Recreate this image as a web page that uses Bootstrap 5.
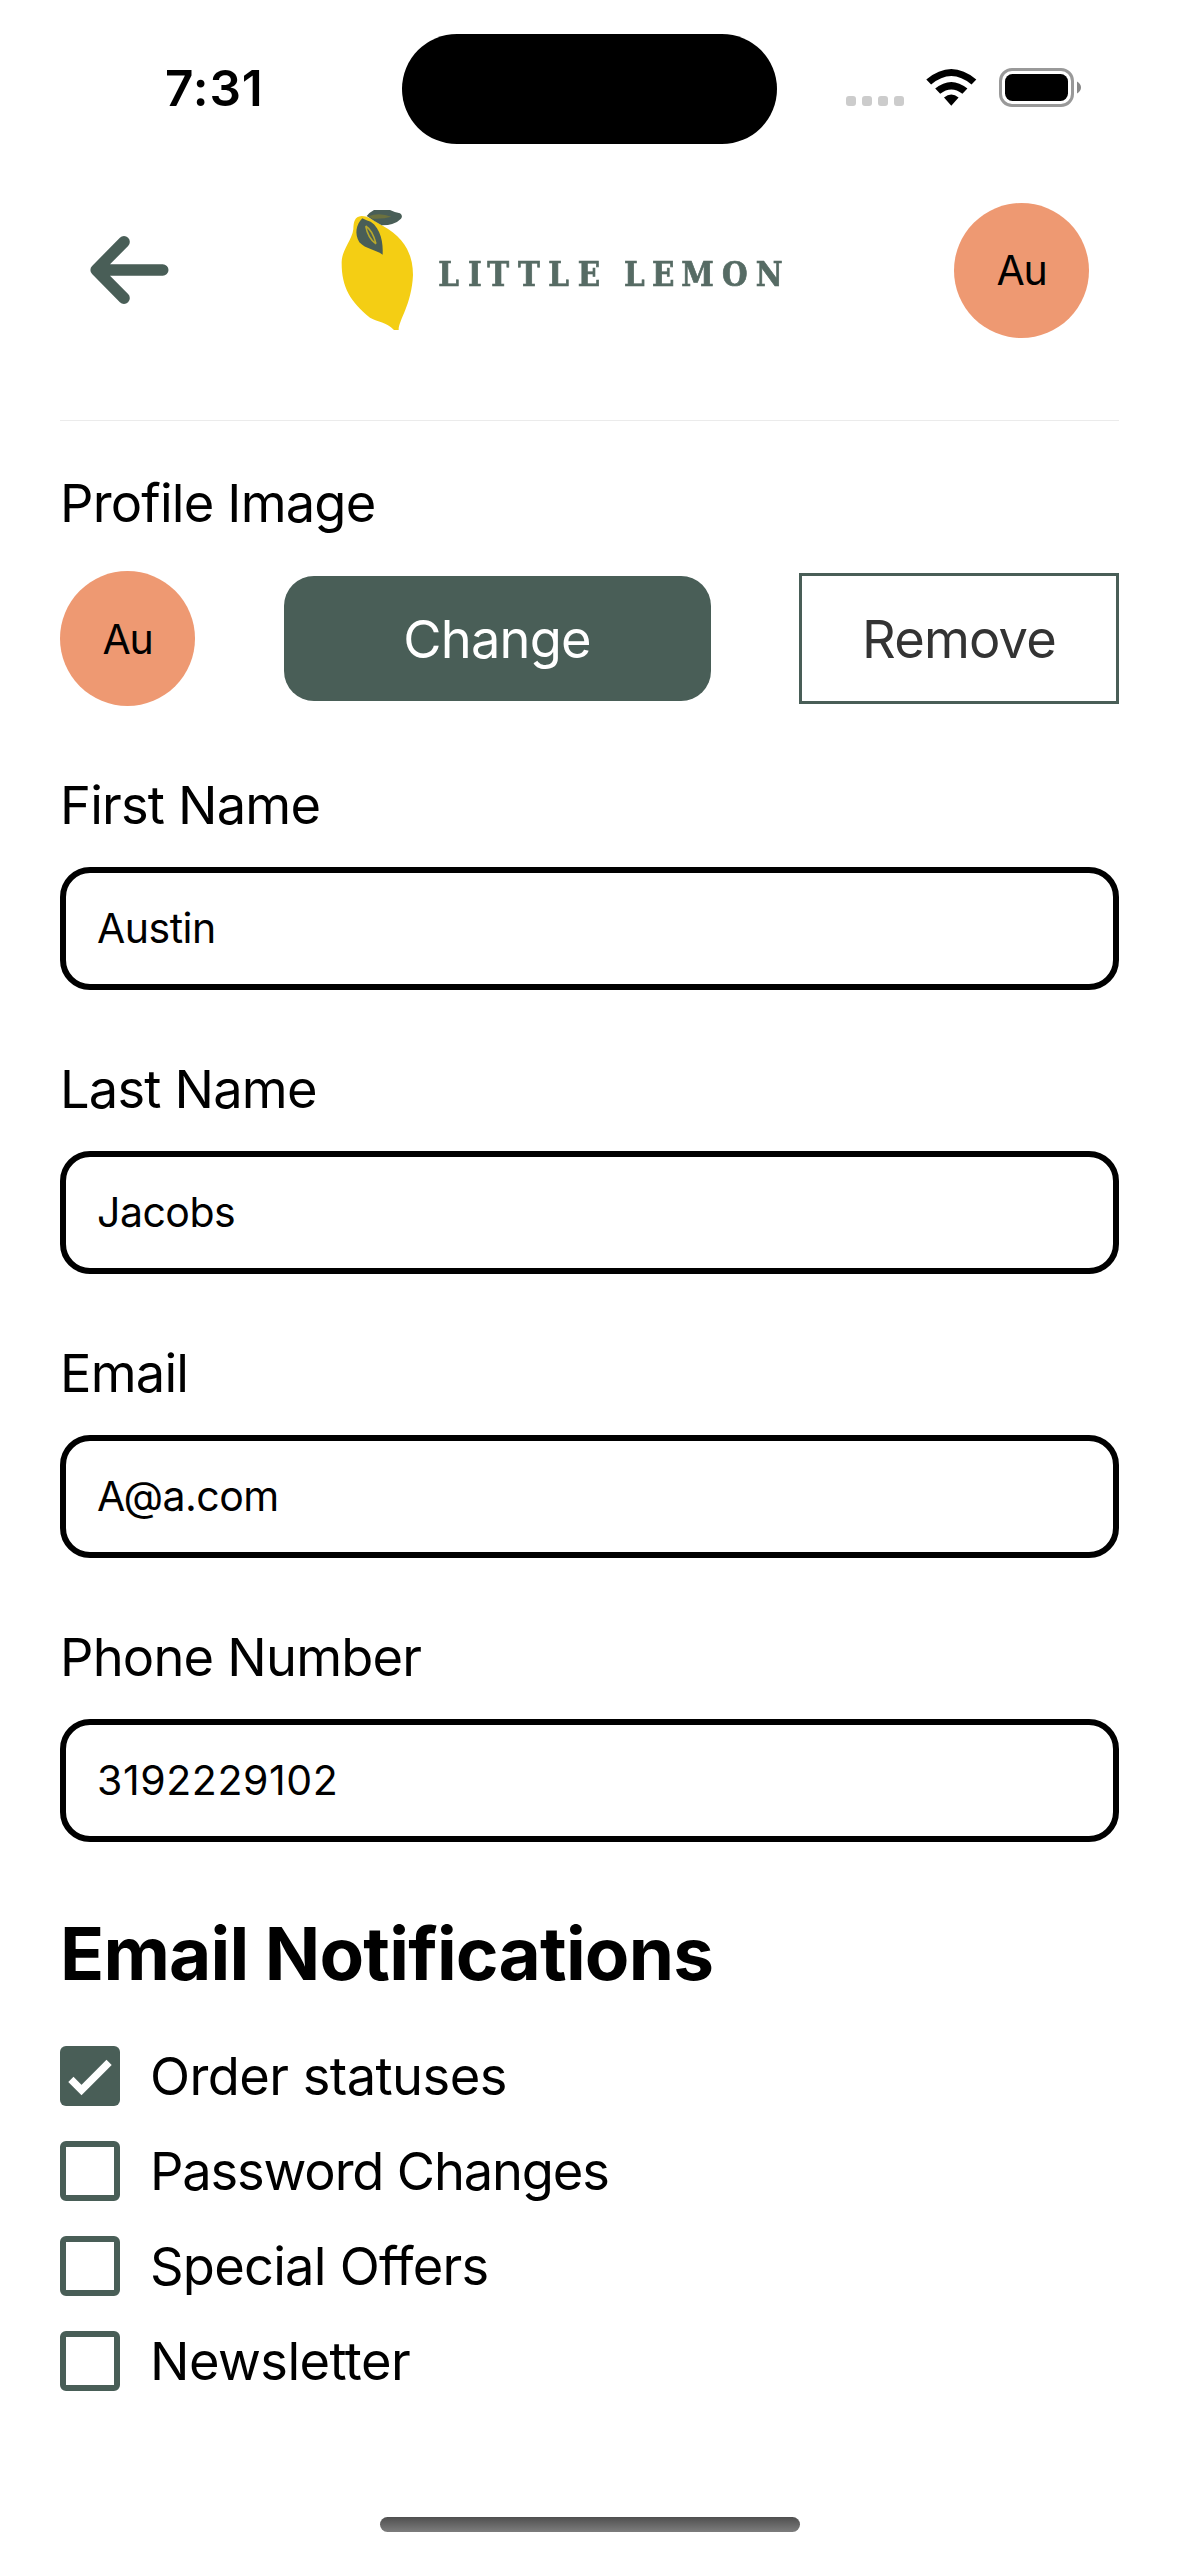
<!DOCTYPE html>
<html lang="en">
<head>
<meta charset="utf-8">
<meta name="viewport" content="width=device-width, initial-scale=1">
<title>Little Lemon – Profile</title>
<link rel="stylesheet" href="https://cdn.jsdelivr.net/npm/bootstrap@5.3.0/dist/css/bootstrap.min.css">
<style>
  :root { --ll-green: #495e57; --ll-peach: #ee9972; }
  body { font-family: Inter, "Liberation Sans", sans-serif; color: #000; background: #fff; font-size: 52.4px; line-height: 64px; letter-spacing: -.8px; }
  .screen { width: 1179px; height: 2556px; }
  .status-bar { height: 174px; padding: 34px 98px 0 0; }
  .clock { width: 402px; padding: 0 0 0 165px; font-size: 49.5px; font-weight: 600; line-height: 108px; letter-spacing: .9px; }
  .island { width: 375px; height: 110px; border-radius: 55px; background: #000; }
  .status-icons { margin-left: auto; height: 110px; }
  .top-bar { height: 247px; margin: 0 60px; padding: 0 30px 54px; border-bottom: 1px solid #ebebeb; }
  .logo { filter: blur(.7px); }
  .avatar { width: 135px; height: 135px; background: var(--ll-peach); font-size: 41px; letter-spacing: -1.2px; }
  .content { padding: 50px 60px 0; }
  .image-row { margin: 36px 0 67px; }
  .btn-change, .btn-remove { font-size: 52.4px; line-height: 64px; padding: 0; letter-spacing: -.8px; }
  .btn-change { width: 427px; height: 125px; border: 0; border-radius: 30px; background: var(--ll-green); color: #fff; }
  .btn-remove { width: 320px; height: 131px; border: 3px solid var(--ll-green); border-radius: 0; color: #333; }
  .field { margin-bottom: 67px; }
  .form-label { display: block; margin-bottom: 30px; }
  .form-control { height: 123px; padding: 0 31px 2px; border: 6px solid #000; border-radius: 30px; color: #000; font-size: 41px; letter-spacing: -.5px; }
  .form-control[type=tel] { letter-spacing: .6px; }
  .form-control:focus { border-color: #000; box-shadow: none; }
  .section-title { font-size: 72.8px; line-height: 87px; font-weight: 700; margin: 68px 0 49px; }
  .check-list { gap: 35px; letter-spacing: -.55px; }
  .check-row { height: 60px; gap: 30px; }
  .check-row:nth-child(2) { letter-spacing: -1.15px; }
  .check-row:nth-child(3) { letter-spacing: -.75px; }
  .tick-box { width: 60px; height: 60px; border: 6px solid var(--ll-green); border-radius: 6px; }
  .tick-box.on { border: 0; background: var(--ll-green); }
  .home-bar { width: 420px; height: 15px; margin: auto auto 24px; background: linear-gradient(#4f4f4f, #7d7d7d); }
</style>
</head>
<body>
<div class="screen d-flex flex-column overflow-hidden">
  <div class="status-bar d-flex">
    <div class="clock">7:31</div>
    <div class="island"></div>
    <svg class="status-icons" width="235" viewBox="846 34 235 110" aria-hidden="true">
      <g fill="#ccc">
        <rect x="846" y="96" width="10" height="10" rx="3"/><rect x="862" y="96" width="10" height="10" rx="3"/>
        <rect x="878" y="96" width="10" height="10" rx="3"/><rect x="894" y="96" width="10" height="10" rx="3"/>
      </g>
      <path d="M926.3 79.5Q951.3 58.5 976.3 79.5L971.5 84.6Q951.3 67.6 931.1 84.6ZM935.2 88.6Q951.3 75.3 967.4 88.6L962.4 93.8Q951.3 85.2 940.2 93.8ZM944 97.6Q951.3 91.4 958.6 97.6L951.3 105.8Z"/>
      <rect x="1000.5" y="69.5" width="72" height="36" rx="11.5" fill="none" stroke="#999" stroke-width="3"/>
      <rect x="1005" y="74" width="63" height="27" rx="7.5"/>
      <path d="M1077 81.5Q1081 84 1081 87.5T1077 93.5Z" fill="#888"/>
    </svg>
  </div>

  <header class="top-bar d-flex align-items-center">
    <svg width="79" height="68" viewBox="0 0 79 68" fill="none" stroke="#495e57" stroke-width="11.6" stroke-linecap="round" stroke-linejoin="round" aria-label="Back">
      <path d="M34 5.9L6.2 34L34 62.1M6.5 34H72.7"/>
    </svg>
    <svg class="logo ms-auto me-auto" width="444" height="120" viewBox="60 60 1332 360" aria-label="Little Lemon">
      <path fill="#f4ce14" d="M125 78C103 80 101 96 100 118C96 150 66 180 65 215C64 290 90 335 150 383C175 397 198 395 222 420H236C236 390 275 345 279 255C279 190 250 140 188 107L150 85Q138 78 125 78Z"/>
      <path fill="#495e57" d="M140 78Q150 66 162 60H210Q224 67 240 70Q250 78 243 86Q225 105 185 106Q160 92 140 78Z"/>
      <path fill="#6b713f" d="M146 78Q180 66 214 80Q190 88 156 86Z"/>
      <path fill="#495e57" d="M127 85C108 105 103 130 118 157C138 178 165 178 188 194C190 160 183 115 152 95Q140 92 127 85Z"/>
      <path fill="none" stroke="#b9a92b" stroke-width="4.5" d="M137 108Q157 120 168 161M137 108Q144 145 168 162"/>
      <text y="287" font-family="'DejaVu Serif Condensed','DejaVu Serif',serif" font-weight="700" font-stretch="condensed" font-size="98" letter-spacing="0" fill="#566b64" stroke="#566b64" stroke-width="2" x="355 444 502 594 685 773 912 996 1084 1206 1307">LITTLELEMON</text>
    </svg>
    <div class="avatar rounded-circle d-flex align-items-center justify-content-center">Au</div>
  </header>

  <main class="content">
    <div>Profile Image</div>
    <div class="image-row d-flex align-items-center justify-content-between">
      <div class="avatar rounded-circle d-flex align-items-center justify-content-center">Au</div>
      <button type="button" class="btn btn-change">Change</button>
      <button type="button" class="btn btn-remove">Remove</button>
    </div>
    <div class="field"><label class="form-label" for="first">First Name</label><input id="first" class="form-control" value="Austin"></div>
    <div class="field"><label class="form-label" for="last">Last Name</label><input id="last" class="form-control" value="Jacobs"></div>
    <div class="field"><label class="form-label" for="email">Email</label><input id="email" class="form-control" value="A@a.com"></div>
    <div class="field mb-0"><label class="form-label" for="phone">Phone Number</label><input id="phone" type="tel" class="form-control" value="3192229102"></div>

    <h2 class="section-title">Email Notifications</h2>
    <div class="check-list d-flex flex-column">
      <div class="check-row d-flex align-items-center"><span class="tick-box on"><svg class="d-block" width="60" height="60" viewBox="0 0 60 60" fill="none" stroke="#fff" stroke-width="7.4"><path d="M10.9 33.4L21.5 44L49.1 16.4"/></svg></span><span>Order statuses</span></div>
      <div class="check-row d-flex align-items-center"><span class="tick-box"></span><span>Password Changes</span></div>
      <div class="check-row d-flex align-items-center"><span class="tick-box"></span><span>Special Offers</span></div>
      <div class="check-row d-flex align-items-center"><span class="tick-box"></span><span>Newsletter</span></div>
    </div>
  </main>
  <div class="home-bar rounded-pill"></div>
</div>
<script src="https://cdn.jsdelivr.net/npm/bootstrap@5.3.0/dist/js/bootstrap.bundle.min.js"></script>
</body>
</html>
